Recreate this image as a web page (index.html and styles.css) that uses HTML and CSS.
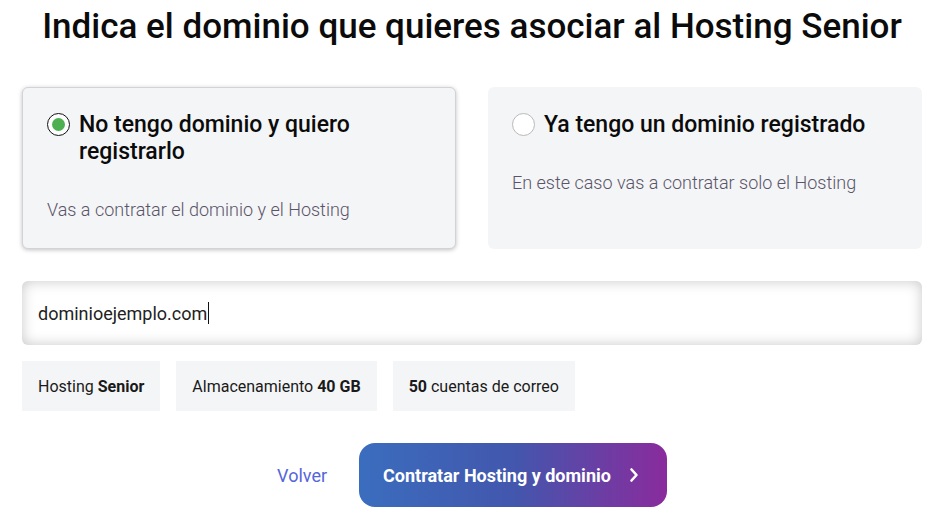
FILE: index.html
```html
<!DOCTYPE html>
<html lang="es">
<head>
    <meta charset="UTF-8">
    <meta name="viewport" content="width=device-width, initial-scale=1.0">
    <title>Hosting Senior</title>
    <link rel="stylesheet" href="styles.css">
</head>
<body>

    <div class="container">

        <h1>Indica el dominio que quieres asociar al Hosting Senior</h1>

        <div class="options">
            <label class="option selected">
                <span class="option-head">
                    <span class="radio checked"></span>
                    <span class="option-title">No tengo dominio y quiero registrarlo</span>
                </span>
                <span class="option-desc">Vas a contratar el dominio y el Hosting</span>
            </label>

            <label class="option">
                <span class="option-head">
                    <span class="radio"></span>
                    <span class="option-title">Ya tengo un dominio registrado</span>
                </span>
                <span class="option-desc">En este caso vas a contratar solo el Hosting</span>
            </label>
        </div>

        <div class="domain-field">
            <span class="domain-value">dominioejemplo.com</span><span class="caret"></span>
        </div>

        <div class="features">
            <div class="feature">Hosting <b>Senior</b></div>
            <div class="feature">Almacenamiento <b>40 GB</b></div>
            <div class="feature"><b>50</b> cuentas de correo</div>
        </div>

        <div class="actions">
            <a class="back-link" href="#">Volver</a>
            <button class="btn-primary">
                Contratar Hosting y dominio
                <svg class="chevron" width="10" height="16" viewBox="0 0 10 16">
                    <path d="M2.5 2.5 L7.5 8 L2.5 13.5" fill="none" stroke="#fff" stroke-width="2.6" stroke-linecap="round" stroke-linejoin="round"/>
                </svg>
            </button>
        </div>

    </div>

</body>
</html>
```

FILE: styles.css
```css
body {
    font-family: Roboto, "Liberation Sans", Arial, sans-serif;
    margin: 0;
    padding: 0;
    background-color: #fff;
    color: #111;
}

.container {
    width: 900px;
    padding-left: 22px;
}

h1 {
    margin: 0;
    padding-top: 6px;
    font-size: 35px;
    line-height: 41px;
    font-weight: 500;
    text-align: center;
    color: #0b0b0b;
    white-space: nowrap;
}

.options {
    display: grid;
    grid-template-columns: 1fr 1fr;
    gap: 32px;
    margin-top: 40px;
}

.option {
    display: flex;
    flex-direction: column;
    height: 162px;
    box-sizing: border-box;
    padding: 24px 24px 0 24px;
    background-color: #f4f5f7;
    border-radius: 6px;
    cursor: pointer;
}

.option.selected {
    border: 1px solid #d2d3d6;
    padding: 23px 23px 0 24px;
    box-shadow: 0 1px 4px rgba(0, 0, 0, 0.25);
}

.option-head {
    display: flex;
    align-items: flex-start;
    gap: 9px;
}

.radio {
    flex: none;
    width: 23px;
    height: 23px;
    box-sizing: border-box;
    border: 1px solid #b9b9b9;
    border-radius: 50%;
    background-color: #fff;
    margin-top: 2px;
    display: flex;
    align-items: center;
    justify-content: center;
}

.radio.checked {
    border: 1.5px solid #111;
}

.radio.checked::after {
    content: "";
    width: 13px;
    height: 13px;
    border-radius: 50%;
    background-color: #4caf50;
}

.option-title {
    font-size: 23px;
    line-height: 27px;
    font-weight: 500;
    color: #0b0b0b;
}

.option-desc {
    margin-top: 34px;
    font-size: 18px;
    line-height: 21px;
    font-weight: 300;
    color: #5a5468;
}

.domain-field {
    display: flex;
    align-items: center;
    margin-top: 32px;
    height: 64px;
    padding: 0 16px;
    border-radius: 6px;
    background-color: #fff;
    box-shadow: inset 0 0 14px rgba(0, 0, 0, 0.22);
    font-size: 18px;
    color: #222;
}

.caret {
    display: inline-block;
    width: 1px;
    height: 22px;
    background-color: #111;
    margin-left: 1px;
}

.features {
    display: flex;
    gap: 16px;
    margin-top: 16px;
}

.feature {
    height: 50px;
    display: flex;
    align-items: center;
    padding: 0 16px;
    background-color: #f4f5f7;
    font-size: 16px;
    color: #1a1a1a;
    white-space: pre;
}

.feature b {
    font-weight: 700;
}

.actions {
    display: flex;
    justify-content: center;
    align-items: center;
    gap: 32px;
    margin-top: 32px;
}

.back-link {
    font-size: 18px;
    color: #5466dc;
    text-decoration: none;
}

.btn-primary {
    display: flex;
    align-items: center;
    gap: 18px;
    height: 64px;
    padding: 0 28px 0 24px;
    border: none;
    border-radius: 16px;
    background: linear-gradient(90deg, #3b6dbe 0%, #4257ad 50%, #8a2b9d 100%);
    color: #fff;
    font-family: inherit;
    font-size: 18px;
    font-weight: 700;
    cursor: pointer;
}
```
